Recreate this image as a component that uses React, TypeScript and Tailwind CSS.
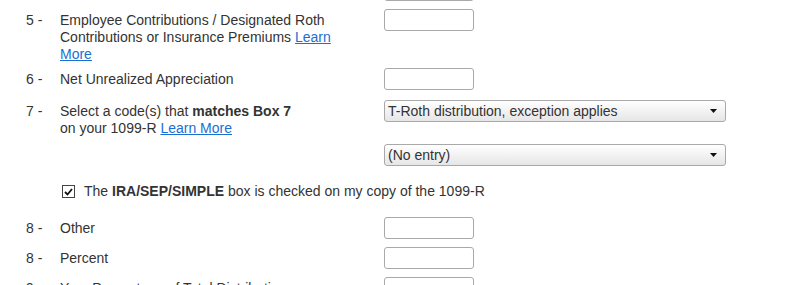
import React from 'react'

const font = { fontFamily: '"Liberation Sans", Arial, sans-serif' }

function TextBox() {
  return <input type="text" className="block h-[22px] w-[90px] rounded-[3px] border border-[#a9a9a9] bg-white px-1 text-sm outline-none" />
}

function Dropdown({ value }: { value: string }) {
  return (
    <div className="flex h-[22px] w-[342px] items-center justify-between rounded-[3px] border border-[#a9a9a9] bg-gradient-to-b from-white to-[#e6e6e6] pl-[3px] pr-[8px] text-sm leading-[17px] text-[#333]">
      <span>{value}</span>
      <svg width="7" height="4" viewBox="0 0 7 4">
        <path d="M0 0h7L3.5 4z" fill="#111" />
      </svg>
    </div>
  )
}

function LearnMore() {
  return <a href="#" className="text-[#1a6fd1] underline">Learn More</a>
}

function Row({ num, children, control, className = '' }: { num: string; children: React.ReactNode; control?: React.ReactNode; className?: string }) {
  return (
    <div className={`grid grid-cols-[60px_324px_1fr] ${className}`}>
      <div className="pl-[26px] pt-[3px]">{num}</div>
      <div className="w-[280px] pt-[3px]">{children}</div>
      <div>{control}</div>
    </div>
  )
}

export default function App() {
  return (
    <div className="h-[285px] w-[787px] overflow-hidden bg-white text-sm leading-[17px] text-[#333]" style={font}>
      <div className="pt-[9px]">
        {/* bottom edge of the box 4 input, scrolled off the top */}
        <div className="-mt-[30px] mb-[8px] pl-[384px]">
          <TextBox />
        </div>
        <Row num="5 -" control={<TextBox />}>
          Employee Contributions / Designated Roth Contributions or Insurance Premiums <LearnMore />
        </Row>
        <Row num="6 -" className="mt-[5px]" control={<TextBox />}>
          Net Unrealized Appreciation
        </Row>
        <Row
          num="7 -"
          className="mt-[10px]"
          control={
            <div className="flex flex-col gap-[22px]">
              <Dropdown value="T-Roth distribution, exception applies" />
              <Dropdown value="(No entry)" />
            </div>
          }
        >
          Select a code(s) that <b>matches Box 7</b>
          <br />
          on your 1099-R <LearnMore />
        </Row>
        <div className="mt-[17px] flex items-center pl-[62px]">
          <div className="flex h-[13px] w-[13px] items-center justify-center border border-[#444] bg-white">
            <svg width="9" height="8" viewBox="0 0 9 8">
              <path d="M1 4l2.5 2.5L8 1" fill="none" stroke="#111" strokeWidth="1.8" />
            </svg>
          </div>
          <span className="ml-[9px]">
            The <b>IRA/SEP/SIMPLE</b> box is checked on my copy of the 1099-R
          </span>
        </div>
        <Row num="8 -" className="mt-[17px]" control={<TextBox />}>Other</Row>
        <Row num="8 -" className="mt-[8px]" control={<TextBox />}>Percent</Row>
        <Row num="9a -" className="mt-[8px]" control={<TextBox />}>Your Percentage of Total Distribution</Row>
      </div>
    </div>
  )
}
